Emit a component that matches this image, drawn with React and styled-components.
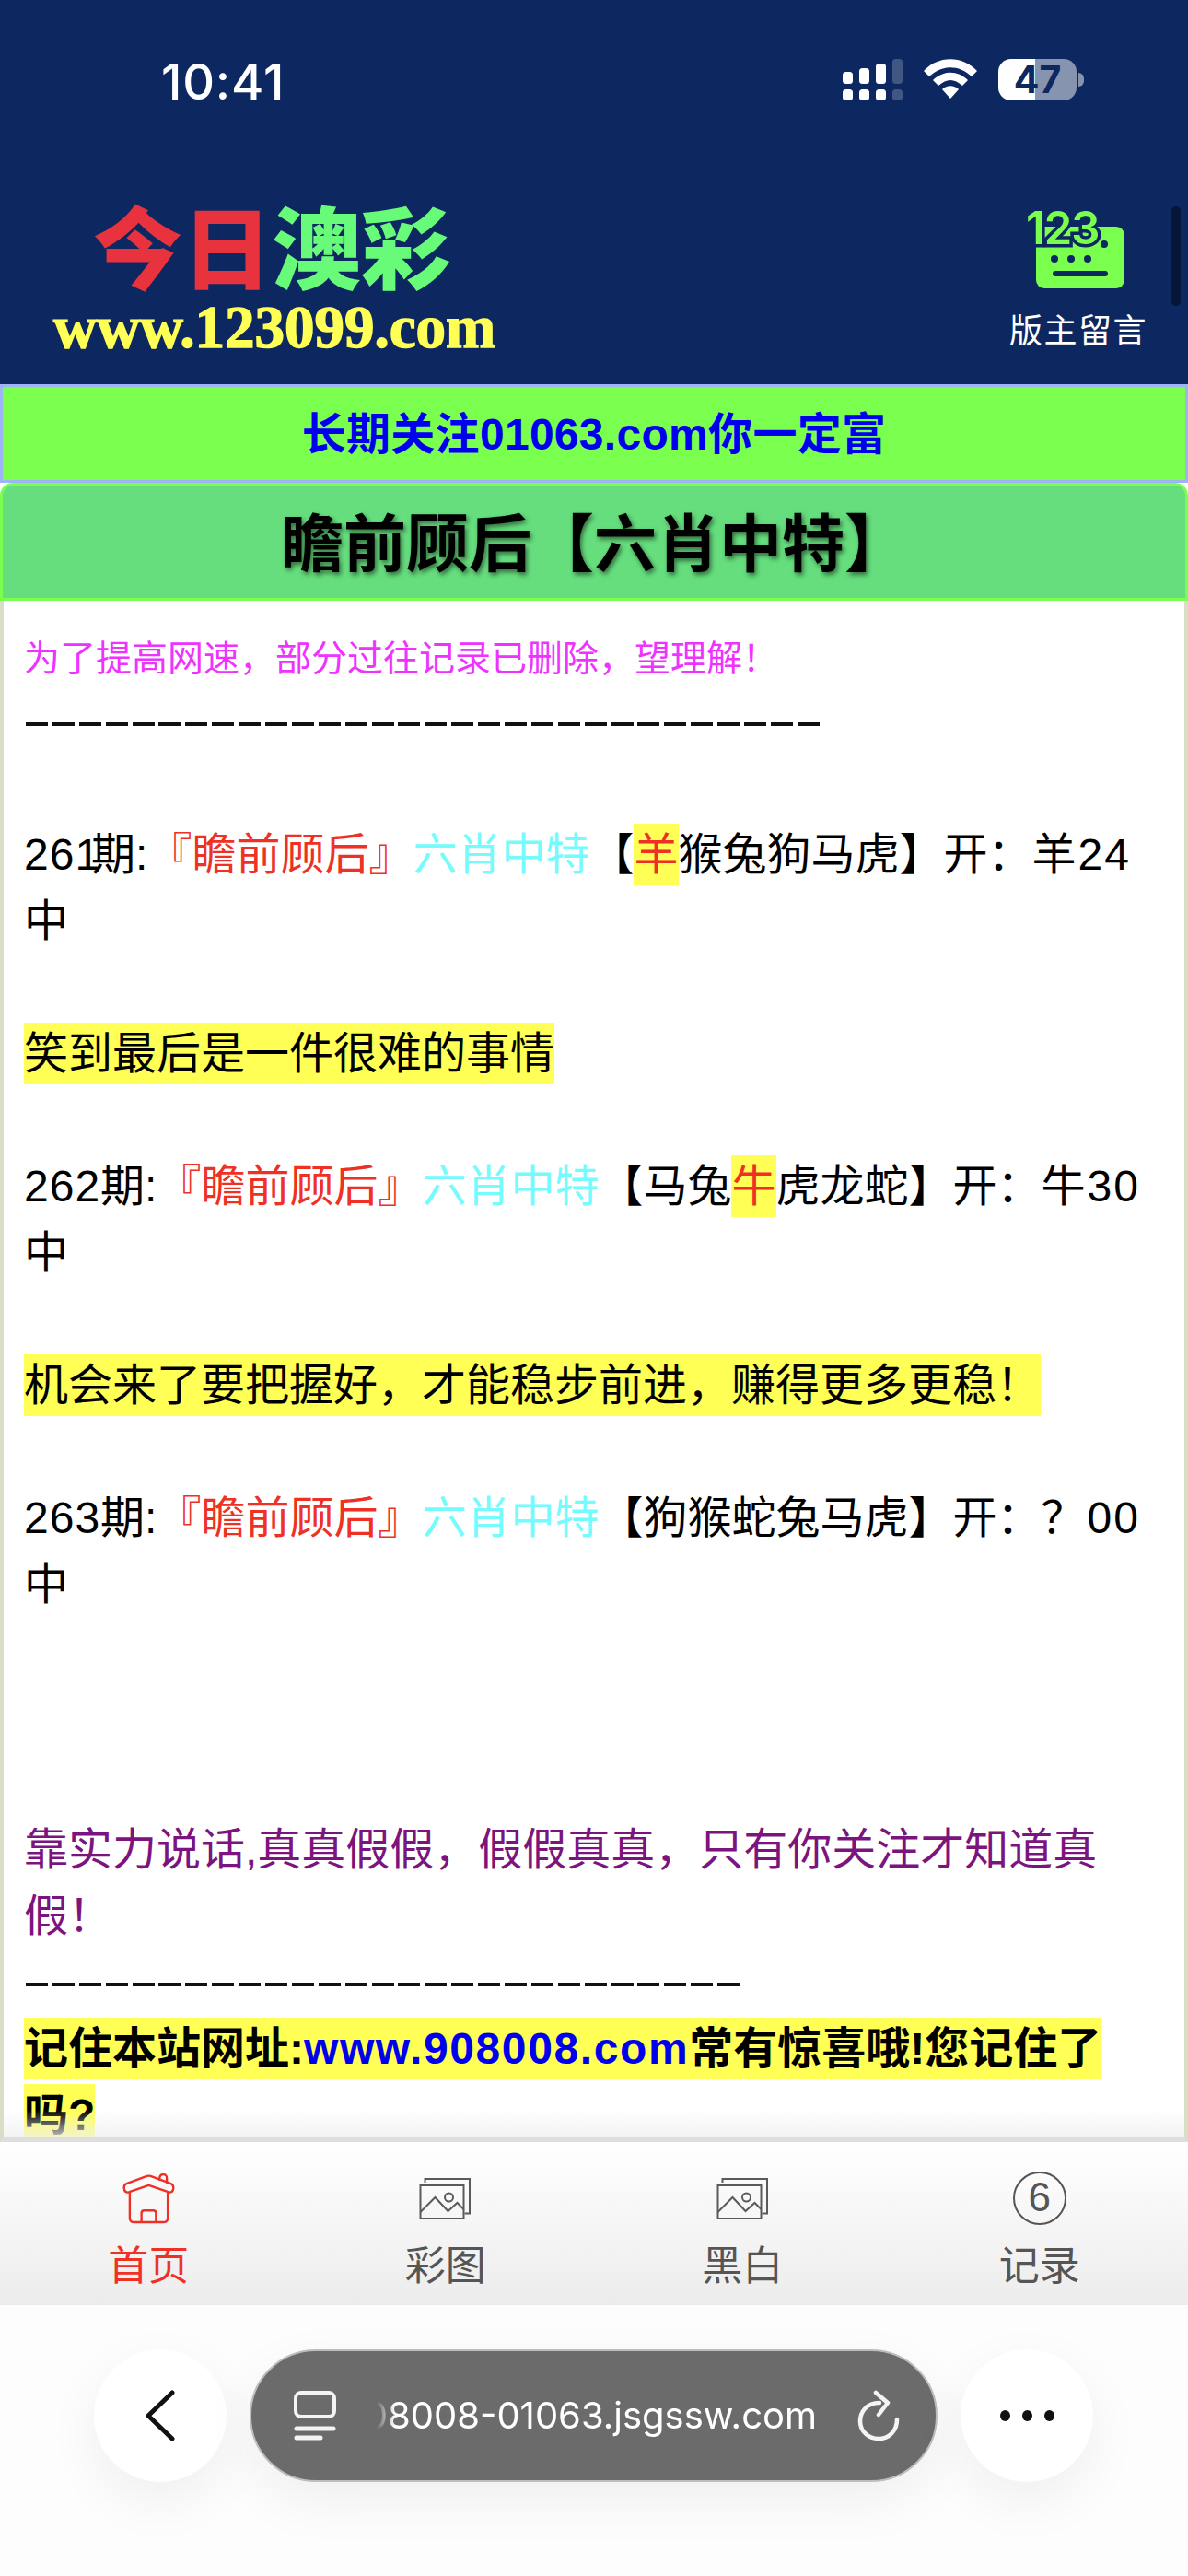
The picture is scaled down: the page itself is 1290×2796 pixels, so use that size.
import styled, { createGlobalStyle } from 'styled-components';

const GlobalStyle = createGlobalStyle`
    html, body {
        margin: 0;
        padding: 0;
        background: #ffffff;
    }
`;

const SANS = `"Liberation Sans", "Noto Sans CJK SC", sans-serif`;
const CJK = `"Noto Sans CJK SC", sans-serif`;

const Page = styled.div`
    width: 1290px;
    height: 2796px;
    display: flex;
    flex-direction: column;
    overflow: hidden;
    font-family: ${SANS};
    position: relative;
`;

/* ---- top bar ---- */
const Header = styled.header`
    height: 417px;
    flex: none;
    background: #0d2760;
    position: relative;
    display: flex;
    flex-direction: column;
`;
const StatusBar = styled.div`
    display: flex;
    justify-content: space-between;
    align-items: flex-start;
    padding: 58px 113px 0 175px;
    height: 209px;
    box-sizing: border-box;
`;
const Time = styled.div`
    font-family: Inter, sans-serif;
    font-weight: 500;
    font-size: 54px;
    line-height: 62px;
    color: #fff;
    letter-spacing: 0.8px;
`;
const StatusIcons = styled.div`
    display: flex;
    align-items: flex-start;
    gap: 23px;
    padding-top: 6px;
`;
const Battery = styled.div`
    display: flex;
    align-items: center;
    gap: 2px;
`;
const BatteryBody = styled.div`
    width: 85px;
    height: 45px;
    border-radius: 14px;
    background: linear-gradient(to right, #fff 47%, #8794b0 47%);
    color: #0d2760;
    font-family: Inter, sans-serif;
    font-weight: 700;
    font-size: 41px;
    line-height: 45px;
    text-align: center;
`;
const BatteryNub = styled.div`
    width: 6px;
    height: 15px;
    border-radius: 0 6px 6px 0;
    background: #8794b0;
`;
const LogoRow = styled.div`
    display: flex;
    justify-content: space-between;
    align-items: flex-start;
    padding: 0 44px 0 58px;
`;
const Logo = styled.div`
    display: flex;
    flex-direction: column;
    align-items: center;
    filter: blur(0.6px);
`;
const LogoTitle = styled.div`
    font-family: ${CJK};
    font-weight: 900;
    font-size: 97px;
    line-height: 110px;
    height: 110px;
    margin-right: 6px;
`;
const LogoRed = styled.span`
    color: #e8333f;
`;
const LogoGreen = styled.span`
    color: #68fb7a;
`;
const LogoUrl = styled.div`
    font-family: "Liberation Serif", serif;
    font-weight: 700;
    font-size: 65px;
    line-height: 72px;
    color: #ffff55;
    -webkit-text-stroke: 1.5px #ffff55;
`;
const Board = styled.div`
    display: flex;
    flex-direction: column;
    align-items: center;
    margin-top: 19px;
`;
const BoardIcon = styled.div`
    margin-right: 6px;
    line-height: 0;
`;
const BoardLabel = styled.div`
    font-family: ${CJK};
    font-size: 36px;
    line-height: 44px;
    letter-spacing: 1.5px;
    color: #fff;
    margin-top: 20px;
`;
const ScrollThumb = styled.div`
    position: absolute;
    top: 224px;
    right: 8px;
    width: 10px;
    height: 108px;
    border-radius: 5px;
    background: #061538;
`;

/* ---- coloured bars ---- */
const Banner = styled.div`
    height: 107px;
    flex: none;
    box-sizing: border-box;
    background: #7bff4f;
    border: 3px solid #9db4f5;
    padding-bottom: 8px;
    display: flex;
    align-items: center;
    justify-content: center;
    color: #0000ee;
    font-weight: 700;
    font-size: 48px;
    letter-spacing: 0.3px;
`;
const TitleBar = styled.div`
    height: 128px;
    flex: none;
    box-sizing: border-box;
    background: #66de7e;
    border: 3px solid #7bff4f;
    border-radius: 14px 14px 0 0;
    padding-bottom: 6px;
    display: flex;
    align-items: center;
    justify-content: center;
    font-family: ${CJK};
    font-weight: 700;
    font-size: 68px;
    color: #000;
    text-shadow: 2px 3px 5px rgba(0, 0, 0, 0.5);
`;

/* ---- article body ---- */
const Article = styled.main`
    height: 1673px;
    flex: none;
    box-sizing: border-box;
    overflow: hidden;
    background: #fff;
    border-left: 4px solid #d9dfc6;
    border-right: 4px solid #d9dfc6;
    border-bottom: 5px solid #dedede;
    padding: 24px 22px 0;
    font-size: 48px;
    line-height: 72px;
    color: #000;
    position: relative;
    &::after {
        content: '';
        position: absolute;
        left: 0;
        right: 0;
        bottom: 0;
        height: 30px;
        background: linear-gradient(to bottom, rgba(245, 245, 245, 0), rgba(240, 240, 240, 0.8));
    }
`;
const Line = styled.div`
    min-height: 72px;
    color: ${(p) => p.color || '#000'};
    font-weight: ${(p) => (p.$bold ? 700 : 400)};
`;
const Notice = styled.div`
    height: 72px;
    font-size: 39px;
    line-height: 78px;
    color: #ee33ff;
`;
const Dashes = styled.div`
    height: 72px;
    display: flex;
    gap: 4.9px;
    align-items: center;
    padding: 4px 0 0 2px;
    box-sizing: border-box;
`;
const Dash = styled.i`
    display: block;
    width: 24px;
    height: 4px;
    background: #111;
`;
const Mark = styled.span`
    background: #ffff55;
    padding: 7px 0;
    -webkit-box-decoration-break: clone;
    box-decoration-break: clone;
`;
const Red = styled.span`
    color: #ee3124;
`;
const Cyan = styled.span`
    color: #75fbfd;
`;
const Blue = styled.span`
    color: #0000ee;
    letter-spacing: 1.6px;
`;
const Num = styled.span`
    letter-spacing: 1px;
`;
const Draw = styled.span`
    letter-spacing: 2px;
    margin-left: 2px;
`;
const NarrowOne = styled.span`
    letter-spacing: -9px;
`;

/* ---- tab bar ---- */
const TabBar = styled.nav`
    height: 177px;
    flex: none;
    background: linear-gradient(to bottom, #ffffff, #ececec);
    display: grid;
    grid-template-columns: repeat(4, 1fr);
`;
const Tab = styled.div`
    display: flex;
    flex-direction: column;
    align-items: center;
    color: ${(p) => (p.$active ? '#ee3124' : '#555555')};
    font-family: ${CJK};
    font-size: 44px;
    line-height: 50px;
`;
const TabIcon = styled.div`
    height: 106px;
    padding-top: 16px;
    display: flex;
    align-items: center;
    justify-content: center;
    box-sizing: border-box;
`;
const CircleSix = styled.div`
    width: 58px;
    height: 58px;
    box-sizing: border-box;
    border: 2.5px solid #555;
    border-radius: 50%;
    font-family: "Liberation Sans", sans-serif;
    font-size: 44px;
    line-height: 52px;
    text-align: center;
`;

/* ---- browser toolbar ---- */
const BrowserBar = styled.div`
    flex: 1;
    background: #fdfdfd;
    display: flex;
    align-items: flex-start;
    padding: 48px 0 0 102px;
    gap: 25px;
`;
const RoundButton = styled.div`
    width: 144px;
    height: 144px;
    border-radius: 50%;
    background: #fff;
    box-shadow: 0 20px 60px rgba(0, 0, 0, 0.06);
    display: flex;
    align-items: center;
    justify-content: center;
`;
const AddressPill = styled.div`
    width: 747px;
    height: 144px;
    box-sizing: border-box;
    border-radius: 72px;
    background: #6b6b6b;
    border: 2px solid #bdbdbd;
    box-shadow: 0 20px 60px rgba(0, 0, 0, 0.06);
    display: flex;
    align-items: center;
    padding: 0 39px 0 46px;
`;
const UrlMask = styled.div`
    width: 482px;
    margin: 0 44px 0 40px;
    overflow: hidden;
    display: flex;
    justify-content: flex-end;
    font-family: Inter, sans-serif;
    font-size: 40px;
    line-height: 48px;
    color: #fff;
    white-space: nowrap;
    mask-image: linear-gradient(to right, transparent 4px, #000 24px);
`;
const MoreDots = styled.div`
    display: flex;
    gap: 13px;
`;
const Dot = styled.i`
    display: block;
    width: 11px;
    height: 12px;
    border-radius: 50%;
    background: #111;
`;

const SignalIcon = () => (
    <svg width="65" height="45" viewBox="0 0 65 45" fill="#fff">
        <rect x="0" y="14" width="11" height="13" rx="3.5" />
        <rect x="18" y="10" width="11" height="17" rx="3.5" />
        <rect x="36" y="5" width="11" height="22" rx="3.5" />
        <rect x="54" y="0" width="11" height="27" rx="3.5" opacity="0.22" />
        <rect x="0" y="33" width="11" height="12" rx="3.5" />
        <rect x="18" y="33" width="11" height="12" rx="3.5" />
        <rect x="36" y="33" width="11" height="12" rx="3.5" />
        <rect x="54" y="33" width="11" height="12" rx="3.5" opacity="0.22" />
    </svg>
);

const WifiIcon = () => (
    <svg width="58" height="43" viewBox="0 0 58 43" fill="#fff">
        <path d="M0 13 C16 -4 42 -4 58 13 L52 19 C38 6 20 6 6 19 Z" />
        <path d="M10 23 C21 12 37 12 48 23 L42 29 C33 21 25 21 16 29 Z" />
        <path d="M20 33 C25 28 33 28 38 33 L29 43 Z" />
    </svg>
);

const KeypadIcon = () => (
    <svg width="106" height="86" viewBox="0 0 106 86">
        <rect x="10" y="18" width="96" height="67" rx="9" fill="#7bff4f" />
        <text
            x="-1"
            y="37"
            fontFamily="Inter, sans-serif"
            fontWeight="600"
            fontSize="49"
            letterSpacing="-1"
            fill="#7bff4f"
            stroke="#0d2760"
            strokeWidth="7"
            paintOrder="stroke"
        >
            123
        </text>
        <circle cx="84" cy="37" r="4" fill="#0d2760" />
        <circle cx="30" cy="53" r="4" fill="#0d2760" />
        <circle cx="48" cy="53" r="4" fill="#0d2760" />
        <circle cx="66" cy="53" r="4" fill="#0d2760" />
        <rect x="28" y="66" width="60" height="6" rx="3" fill="#0d2760" />
    </svg>
);

const HomeIcon = () => (
    <svg width="61" height="55" viewBox="0 0 58 56" fill="none" stroke="#ee3124" strokeWidth="2.4" strokeLinejoin="round">
        <path d="M41 8 V5 a4 4 0 0 1 8 0 V11" />
        <path d="M5 11 L27 3 Q29 2.4 31 3 L53 11 C58 13 57 21 52 21 Q51 21 49 20 L29 13 L9 20 Q7 21 6 21 C1 21 0 13 5 11 Z" />
        <path d="M8 21 V49 Q8 54 13 54 H45 Q50 54 50 49 V20" />
        <path d="M21 54 V44 Q21 41 24 41 H34 Q37 41 37 44 V54" />
    </svg>
);

const PicturesIcon = () => (
    <svg width="59" height="45" viewBox="0 0 56 45" fill="none" stroke="#5a5a5a" strokeWidth="2">
        <path d="M6 5 V1 H54.5 V38.5 H49" />
        <rect x="1" y="8" width="47" height="36" />
        <path d="M1 37 L17 21 L31 36 L41 27 L48 34" />
        <circle cx="32" cy="21" r="4.5" />
    </svg>
);

const BackChevron = () => (
    <svg width="32" height="56" viewBox="0 0 32 56" fill="none" stroke="#111" strokeWidth="5" strokeLinecap="round" strokeLinejoin="round">
        <path d="M29 3 L3 28 L29 53" />
    </svg>
);

const ReaderIcon = () => (
    <svg width="46" height="54" viewBox="0 0 46 54" fill="none" stroke="#f4f4f4">
        <rect x="2" y="2" width="42" height="26" rx="6" strokeWidth="4" />
        <path d="M3 41 H43" strokeWidth="5" strokeLinecap="round" />
        <path d="M3 51 H29" strokeWidth="5" strokeLinecap="round" />
    </svg>
);

const ReloadIcon = () => (
    <svg width="46" height="56" viewBox="0 0 46 56" fill="none" stroke="#f4f4f4" strokeWidth="4.5" strokeLinecap="round" strokeLinejoin="round">
        <path d="M24 14 C10 14 3 24 3 34 C3 45 12 53 23 53 C34 53 43 45 43 32" />
        <path d="M20 3 L33 14 L23 27" />
    </svg>
);

const App = () => {
    return (
        <Page>
            <GlobalStyle />
            <Header>
                <StatusBar>
                    <Time>10:41</Time>
                    <StatusIcons>
                        <SignalIcon />
                        <WifiIcon />
                        <Battery>
                            <BatteryBody>47</BatteryBody>
                            <BatteryNub />
                        </Battery>
                    </StatusIcons>
                </StatusBar>
                <LogoRow>
                    <Logo>
                        <LogoTitle>
                            <LogoRed>今日</LogoRed>
                            <LogoGreen>澳彩</LogoGreen>
                        </LogoTitle>
                        <LogoUrl>www.123099.com</LogoUrl>
                    </Logo>
                    <Board>
                        <BoardIcon><KeypadIcon /></BoardIcon>
                        <BoardLabel>版主留言</BoardLabel>
                    </Board>
                </LogoRow>
                <ScrollThumb />
            </Header>

            <Banner>长期关注01063.com你一定富</Banner>
            <TitleBar>瞻前顾后【六肖中特】</TitleBar>

            <Article>
                <Notice>为了提高网速，部分过往记录已删除，望理解！</Notice>
                <Dashes>
                    {Array.from({ length: 30 }).map((_, i) => (
                        <Dash key={i} />
                    ))}
                </Dashes>
                <Line />
                <Line>
                    <Num>26<NarrowOne>1</NarrowOne></Num>期:<Red>『瞻前顾后』</Red><Cyan>六肖中特</Cyan>【<Mark><Red>羊</Red></Mark>猴兔狗马虎】开：羊<Draw>24</Draw>中
                </Line>
                <Line />
                <Line>
                    <Mark>笑到最后是一件很难的事情</Mark>
                </Line>
                <Line />
                <Line>
                    <Num>262</Num>期:<Red>『瞻前顾后』</Red><Cyan>六肖中特</Cyan>【马兔<Mark><Red>牛</Red></Mark>虎龙蛇】开：牛<Draw>30</Draw>中
                </Line>
                <Line />
                <Line>
                    <Mark>机会来了要把握好，才能稳步前进，赚得更多更稳！</Mark>
                </Line>
                <Line />
                <Line>
                    <Num>263</Num>期:<Red>『瞻前顾后』</Red><Cyan>六肖中特</Cyan>【狗猴蛇兔马虎】开：？<Draw>00</Draw>中
                </Line>
                <Line />
                <Line />
                <Line />
                <Line color="#7b147e">靠实力说话,真真假假，假假真真，只有你关注才知道真假！</Line>
                <Dashes>
                    {Array.from({ length: 27 }).map((_, i) => (
                        <Dash key={i} />
                    ))}
                </Dashes>
                <Line $bold>
                    <Mark>记住本站网址:<Blue>www.908008.com</Blue>常有惊喜哦!您记住了吗?</Mark>
                </Line>
            </Article>

            <TabBar>
                <Tab $active>
                    <TabIcon><HomeIcon /></TabIcon>
                    首页
                </Tab>
                <Tab>
                    <TabIcon><PicturesIcon /></TabIcon>
                    彩图
                </Tab>
                <Tab>
                    <TabIcon><PicturesIcon /></TabIcon>
                    黑白
                </Tab>
                <Tab>
                    <TabIcon><CircleSix>6</CircleSix></TabIcon>
                    记录
                </Tab>
            </TabBar>

            <BrowserBar>
                <RoundButton><BackChevron /></RoundButton>
                <AddressPill>
                    <ReaderIcon />
                    <UrlMask>908008-01063.jsgssw.com</UrlMask>
                    <ReloadIcon />
                </AddressPill>
                <RoundButton>
                    <MoreDots>
                        <Dot />
                        <Dot />
                        <Dot />
                    </MoreDots>
                </RoundButton>
            </BrowserBar>
        </Page>
    );
};

export default App;
